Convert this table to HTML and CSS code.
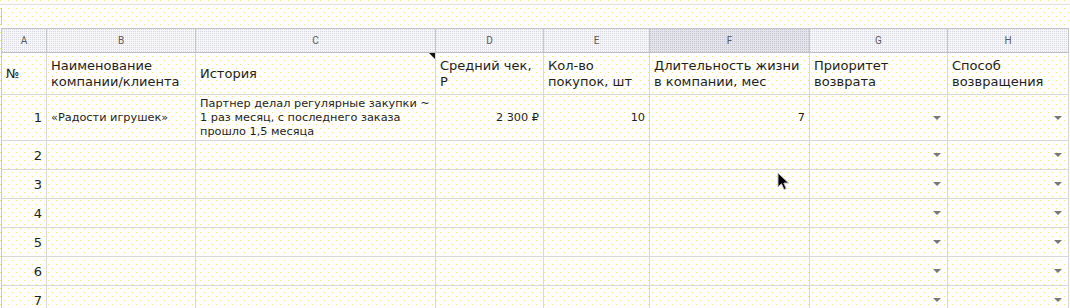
FILE: index.html
```html
<!DOCTYPE html>
<html lang="ru">
<head>
<meta charset="utf-8">
<link rel="stylesheet" href="styles.css">
</head>
<body>
<div class="sheet">
  <div class="topbar"><div class="topline"><div class="fx"></div></div></div>
  <div class="grid">
    <div class="ch">A</div>
    <div class="ch">B</div>
    <div class="ch">C</div>
    <div class="ch">D</div>
    <div class="ch">E</div>
    <div class="ch sel">F</div>
    <div class="ch">G</div>
    <div class="ch">H</div>

    <div class="c hd">№</div>
    <div class="c hd">Наименование<br>компании/клиента</div>
    <div class="c hd note">История</div>
    <div class="c hd">Средний чек,<br>Р</div>
    <div class="c hd">Кол-во<br>покупок, шт</div>
    <div class="c hd">Длительность жизни<br>в компании, мес</div>
    <div class="c hd">Приоритет<br>возврата</div>
    <div class="c hd">Способ<br>возвращения</div>

    <div class="c num">1</div>
    <div class="c sm">«Радости игрушек»</div>
    <div class="c sm hist">Партнер делал регулярные закупки ~<br>1 раз месяц, с последнего заказа<br>прошло 1,5 месяца</div>
    <div class="c sm right">2 300 ₽</div>
    <div class="c sm right">10</div>
    <div class="c sm right">7</div>
    <div class="c dd"><span class="arrow"></span></div>
    <div class="c dd"><span class="arrow"></span></div>

    <div class="c num">2</div><div class="c"></div><div class="c"></div><div class="c"></div><div class="c"></div><div class="c"></div><div class="c dd"><span class="arrow"></span></div><div class="c dd"><span class="arrow"></span></div>
    <div class="c num">3</div><div class="c"></div><div class="c"></div><div class="c"></div><div class="c"></div><div class="c"></div><div class="c dd"><span class="arrow"></span></div><div class="c dd"><span class="arrow"></span></div>
    <div class="c num">4</div><div class="c"></div><div class="c"></div><div class="c"></div><div class="c"></div><div class="c"></div><div class="c dd"><span class="arrow"></span></div><div class="c dd"><span class="arrow"></span></div>
    <div class="c num">5</div><div class="c"></div><div class="c"></div><div class="c"></div><div class="c"></div><div class="c"></div><div class="c dd"><span class="arrow"></span></div><div class="c dd"><span class="arrow"></span></div>
    <div class="c num">6</div><div class="c"></div><div class="c"></div><div class="c"></div><div class="c"></div><div class="c"></div><div class="c dd"><span class="arrow"></span></div><div class="c dd"><span class="arrow"></span></div>
    <div class="c num">7</div><div class="c"></div><div class="c"></div><div class="c"></div><div class="c"></div><div class="c"></div><div class="c dd"><span class="arrow"></span></div><div class="c dd"><span class="arrow"></span></div>
  </div>
  <svg class="cursor" width="13" height="20" viewBox="0 0 13 20">
    <path d="M1 1 L1 15 L4.5 11.8 L7 17.5 L9.2 16.6 L6.8 11 L11.5 11 Z" fill="#000" stroke="#bdbdbd" stroke-width="1" stroke-linejoin="round"/>
  </svg>
</div>
</body>
</html>
```
FILE: styles.css
```css
html, body {
  margin: 0;
  padding: 0;
}
body {
  width: 1070px;
  height: 308px;
  overflow: hidden;
  background-color: #fdfdff;
  background-image:
    conic-gradient(at 1px 1px, transparent 75%, #f2ea6e 0),
    conic-gradient(at 1px 1px, transparent 75%, #f2ea6e 0);
  background-size: 8px 8px;
  background-position: 0 0, 4px 4px;
  font-family: "DejaVu Sans", sans-serif;
  color: #1f1f1f;
}
.sheet {
  position: relative;
}
.topbar {
  height: 28px;
  padding-top: 4px;
  box-sizing: border-box;
}
.topline {
  height: 100%;
  border-top: 1px solid #e2e2da;
  box-sizing: border-box;
  display: flex;
}
.fx {
  width: 1px;
  height: 17px;
  margin-top: 3px;
  margin-left: 1px;
  background: #c4c4c8;
}
.grid {
  display: grid;
  grid-template-columns: 45px 149px 240px 108px 106px 160px 138px 121px;
  grid-template-rows: 24px 42px 46px repeat(6, 29px);
  margin-left: 1px;
  width: 1068px;
  box-sizing: border-box;
  border-left: 1px solid #c8c8cc;
  border-top: 1px solid #c4c4c8;
}
.ch {
  box-sizing: border-box;
  border-right: 1px solid #c6c6ca;
  border-bottom: 1px solid #c0c0c4;
  display: flex;
  align-items: center;
  justify-content: center;
  font-family: Roboto, "Liberation Sans", sans-serif;
  font-size: 10px;
  color: #5a5a5e;
  background-color: #f6f6f9;
  background-image: conic-gradient(at 1px 1px, transparent 75%, #d8d8e0 0);
  background-size: 2px 2px;
}
.ch.sel {
  background-color: #e4e4ea;
  background-image: conic-gradient(at 1px 1px, transparent 75%, #c4c4ce 0);
}
.c {
  box-sizing: border-box;
  border-right: 1px solid #d8d8d8;
  border-bottom: 1px solid #d8d8d8;
  display: flex;
  align-items: center;
  padding: 0 4px;
  position: relative;
  min-width: 0;
}
.hd {
  font-size: 13px;
  line-height: 16px;
  color: #1f1f1f;
}
.num {
  justify-content: flex-end;
  font-size: 13px;
  color: #1f1f1f;
}
.sm {
  font-size: 11.3px;
  line-height: 14px;
  color: #1f1f1f;
  white-space: nowrap;
}
.right {
  justify-content: flex-end;
}
.dd {
  justify-content: flex-end;
  padding-right: 6px;
}
.arrow {
  width: 0;
  height: 0;
  border-left: 4px solid transparent;
  border-right: 4px solid transparent;
  border-top: 4px solid #787878;
}
.note::after {
  content: "";
  position: absolute;
  top: 0;
  right: 0;
  width: 0;
  height: 0;
  border-top: 6px solid #111;
  border-left: 6px solid transparent;
}
.cursor {
  position: absolute;
  left: 777px;
  top: 172px;
}
```
